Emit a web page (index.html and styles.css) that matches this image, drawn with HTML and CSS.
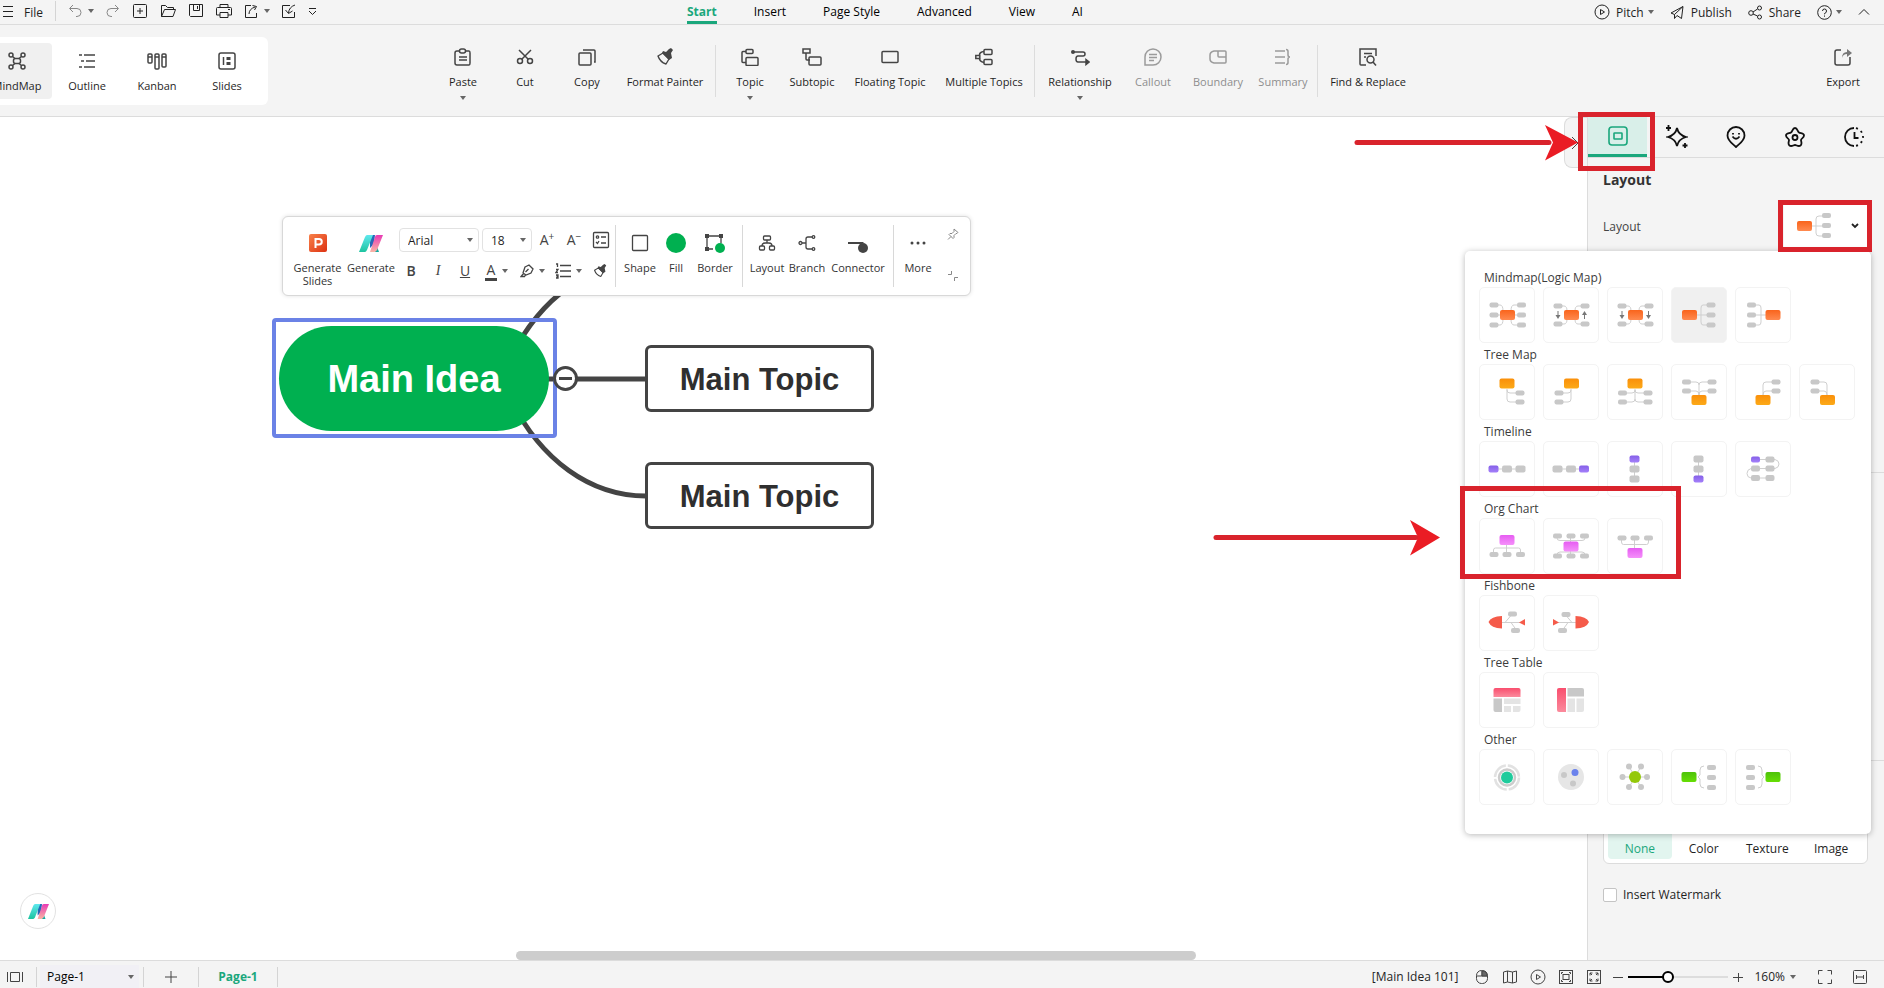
FILE: index.html
```
<!DOCTYPE html>
<html lang="en">
<head>
  <meta charset="UTF-8">
  <meta name="viewport" content="width=device-width, initial-scale=1.0">
  <title>Mind Map Editor</title>
  <link rel="stylesheet" href="styles.css">
</head>
<body>
  <!-- Shared gradients and symbols -->
  <svg class="defs" aria-hidden="true">
    <defs>
      <linearGradient id="g-orange" x1="0" y1="0" x2="0" y2="1"><stop offset="0" stop-color="#f9641c"/><stop offset="1" stop-color="#ff8a50"/></linearGradient>
      <linearGradient id="g-amber" x1="0" y1="0" x2="0" y2="1"><stop offset="0" stop-color="#fa8f0a"/><stop offset="1" stop-color="#fcaa18"/></linearGradient>
      <linearGradient id="g-purple" x1="0" y1="0" x2="0" y2="1"><stop offset="0" stop-color="#8560e8"/><stop offset="1" stop-color="#a480fa"/></linearGradient>
      <linearGradient id="g-pink" x1="0" y1="0" x2="0" y2="1"><stop offset="0" stop-color="#e65cf2"/><stop offset="1" stop-color="#f590fa"/></linearGradient>
      <linearGradient id="g-red" x1="0" y1="0" x2="0" y2="1"><stop offset="0" stop-color="#f94e6e"/><stop offset="1" stop-color="#fb8a9c"/></linearGradient>
      <linearGradient id="g-green" x1="0" y1="0" x2="0" y2="1"><stop offset="0" stop-color="#4dc20a"/><stop offset="1" stop-color="#66de05"/></linearGradient>
      <linearGradient id="g-slide" x1="0" y1="0" x2="1" y2="1"><stop offset="0" stop-color="#f8814a"/><stop offset="1" stop-color="#dd3212"/></linearGradient>
      <linearGradient id="g-teal" x1="0" y1="0" x2="0" y2="1"><stop offset="0" stop-color="#5fe8ee"/><stop offset="1" stop-color="#1ec4a0"/></linearGradient>
      <linearGradient id="g-rose" x1="0" y1="0" x2="0" y2="1"><stop offset="0" stop-color="#e83ab4"/><stop offset="1" stop-color="#f9b4a4"/></linearGradient>
    </defs>
    <symbol id="logo" viewBox="0 0 24 18">
      <g stroke="none">
        <path d="M13 10h4l3 8h-4z" fill="#14a8a0"/>
        <path d="M11 1h5l-1 9-4 4z" fill="#2667b8"/>
        <path d="M8 1h6L8 16q-1 2-2 2H0L6 3q1-2 2-2z" fill="url(#g-teal)"/>
        <path d="M18 1h6l-6 15q-1 2-3 2h-4l5-15q0-2 2-2z" fill="url(#g-rose)"/>
      </g>
    </symbol>
    <symbol id="brush" viewBox="0 0 18 18">
      <path d="M2 8l5-3 6 6-3 5q-6-2-8-8z" fill="none" stroke="#444" stroke-width="1.4" stroke-linejoin="round"/>
      <path d="M7 3l3 1 3-3 2-1 2 2-2 3 1 5-3 2-7-7z" fill="#444" stroke="none"/>
    </symbol>
    <symbol id="tri" viewBox="0 0 6 4"><path d="M0 0h6L3 4z"/></symbol>
  </svg>

  <!-- Menu bar -->
  <header class="menubar">
    <div class="quick">
      <button class="hamburger" aria-label="Menu"><svg width="12" height="12" viewBox="0 0 12 12"><path d="M1 1.500h10M1 6.500h10M1 11.500h10"/></svg></button>
      <button class="file">File</button>
      <span class="bar-sep"></span>
      <button class="undo dim" aria-label="Undo"><svg width="14" height="14" viewBox="0 0 14 14"><path d="M5 1L1.500 4.500 5 8M2 4.500h7a4 4 0 0 1 0 8H8"/></svg><svg class="tri" width="6" height="4"><use href="#tri"/></svg></button>
      <button class="dim" aria-label="Redo"><svg width="14" height="14" viewBox="0 0 14 14"><path d="M9 1l3.500 3.500L9 8M12 4.500H5a4 4 0 0 0 0 8h1"/></svg></button>
      <button aria-label="New"><svg width="16" height="16" viewBox="0 0 16 16"><rect x="1.500" y="1.500" width="13" height="13" rx="1"/><path d="M8 5v6M5 8h6"/></svg></button>
      <button aria-label="Open"><svg width="16" height="16" viewBox="0 0 16 16"><path d="M1.500 13.500v-11h4l2 2h6v2M1.500 13.500l3-7h11l-2.500 7z"/></svg></button>
      <button aria-label="Save"><svg width="16" height="16" viewBox="0 0 16 16"><path d="M1.500 1.500h13v12h-12l-1-1zM5.500 1.500v6h6v-6M9.500 3v3"/></svg></button>
      <button aria-label="Print"><svg width="16" height="16" viewBox="0 0 16 16"><path d="M4 5V1.500h8V5M4 12H.5V5.500q0-1 1-1h13q1 0 1 1V12H12M4 9.500h8v5H4zM12 6.500h2"/></svg></button>
      <button aria-label="Share file"><svg width="14" height="14" viewBox="0 0 14 14"><path d="M7 1.500H1.500v12h11V9M5 10q0-5 6-7M8.500 1.500l4 1-2 3.500"/></svg><svg class="tri" width="6" height="4"><use href="#tri"/></svg></button>
      <button aria-label="Import"><svg width="14" height="14" viewBox="0 0 14 14"><path d="M8 1.500H.5v12h12V8M13 1q-6 2-6.500 8M3.500 6L6.500 9.500 10.500 7"/></svg></button>
      <button aria-label="Customize"><svg width="9" height="9" viewBox="0 0 9 9"><path d="M1 1.500h7M1 4l3.500 3.500L8 4"/></svg></button>
    </div>
    <nav class="tabs">
      <a href="#" class="active">Start</a>
      <a href="#">Insert</a>
      <a href="#">Page Style</a>
      <a href="#">Advanced</a>
      <a href="#">View</a>
      <a href="#">AI</a>
    </nav>
    <div class="account">
      <button><svg width="16" height="16" viewBox="0 0 16 16"><circle cx="8" cy="8" r="7"/><path d="M6.500 5.500v5l4-2.500z"/></svg>Pitch<svg class="tri" width="6" height="4"><use href="#tri"/></svg></button>
      <button><svg width="15" height="15" viewBox="0 0 15 15"><path d="M1 8l12-6.500-1.500 12L7 10.500 4.500 13.500V9.500zM4.500 9.500L13 1.500"/></svg>Publish</button>
      <button><svg width="15" height="15" viewBox="0 0 15 15"><circle cx="3" cy="8" r="2.300"/><circle cx="11.500" cy="3" r="2"/><circle cx="11.500" cy="12" r="2"/><path d="M5 7l4.500-3M5 9l4.500 2"/></svg>Share</button>
      <button class="help" aria-label="Help"><svg width="15" height="15" viewBox="0 0 15 15"><circle cx="7.500" cy="7.500" r="6.800"/><path d="M5.500 6q0-2 2-2t2 2-2 2.500v.8M7.500 10.500v1.200"/></svg><svg class="tri" width="6" height="4"><use href="#tri"/></svg></button>
      <button aria-label="Collapse ribbon"><svg width="12" height="8" viewBox="0 0 12 8"><path d="M1 6.500l5-5 5 5"/></svg></button>
    </div>
  </header>

  <!-- Ribbon -->
  <section class="ribbon">
    <div class="modes">
      <button class="mode active"><svg width="18" height="18" viewBox="0 0 18 18"><circle cx="3" cy="3" r="2"/><circle cx="15" cy="3" r="2"/><circle cx="3" cy="15" r="2"/><circle cx="15" cy="15" r="2"/><rect x="5.500" y="6.500" width="7" height="5" rx="2"/><path d="M4.500 4.500l2.500 2M13.500 4.500L11 6.500M4.500 13.500l2.500-2M13.500 13.500l-2.500-2"/></svg>MindMap</button>
      <button class="mode"><svg width="18" height="18" viewBox="0 0 18 18"><path d="M1 3h3M6 3h11M3 9h3M8 9h9M1 15h3M6 15h11"/></svg>Outline</button>
      <button class="mode"><svg width="20" height="18" viewBox="0 0 20 18"><rect x="1" y="2" width="4" height="9" rx="1"/><rect x="8" y="2" width="4" height="15" rx="1"/><rect x="15" y="2" width="4" height="13" rx="1"/><path d="M1 5h4M8 5h4M15 5h4"/></svg>Kanban</button>
      <button class="mode"><svg width="18" height="18" viewBox="0 0 18 18"><rect x="1" y="1" width="16" height="16" rx="2"/><path d="M5.500 5v8"/><path d="M8.500 5h4v3h-4zM8.500 10h4v3h-4z" fill="#444" stroke="none"/></svg>Slides</button>
    </div>
    <div class="tools">
      <button class="tool w62"><svg width="18" height="18" viewBox="0 0 18 18"><path d="M5 3H3q-2 0-2 2v10q0 2 2 2h12q1 0 1-2V5q0-2-1-2h-3"/><rect x="5.500" y="1" width="6" height="4" rx="2"/><path d="M5 9h8M5 12h8"/></svg>Paste<svg class="tri" width="6" height="4"><use href="#tri"/></svg></button>
      <button class="tool w62"><svg width="18" height="18" viewBox="0 0 18 18"><circle cx="4" cy="13" r="2.500"/><circle cx="14" cy="13" r="2.500"/><path d="M3 2l9 9M15 2l-9 9"/></svg>Cut</button>
      <button class="tool w62"><svg width="18" height="18" viewBox="0 0 18 18"><rect x="1" y="5" width="12" height="12" rx="1"/><path d="M5 2h11q1 0 1 1v11h-1"/></svg>Copy</button>
      <button class="tool w94"><svg width="18" height="18"><use href="#brush"/></svg>Format Painter</button>
      <span class="tool-sep"></span>
      <button class="tool w62"><svg width="18" height="18" viewBox="0 0 18 18"><rect x="5" y="1.500" width="7" height="4" rx="1"/><path d="M5 3.500H2q-1 0-1 1v9q0 1 1 1h3"/><rect x="5" y="9.500" width="12" height="8" rx="1"/></svg>Topic<svg class="tri" width="6" height="4"><use href="#tri"/></svg></button>
      <button class="tool w62"><svg width="20" height="18" viewBox="0 0 20 18"><rect x="1" y="1" width="7" height="4"/><path d="M4 5v6q0 1 1 1h3"/><rect x="7" y="9" width="12" height="8" rx="1"/></svg>Subtopic</button>
      <button class="tool w94"><svg width="18" height="18" viewBox="0 0 18 18"><rect x="1" y="3.500" width="16" height="11" rx="1"/></svg>Floating Topic</button>
      <button class="tool w94"><svg width="18" height="18" viewBox="0 0 18 18"><rect x="9" y="1.500" width="8" height="5" rx="1"/><rect x="9" y="11.500" width="8" height="5" rx="1"/><rect x=".8" y="7.500" width="4" height="3"/><path d="M9 3.500Q4.500 4 4.500 7M9 14.500q-4.500-1-4.500-4"/></svg>Multiple Topics</button>
      <span class="tool-sep"></span>
      <button class="tool w84"><svg width="20" height="18" viewBox="0 0 20 18"><circle cx="3" cy="4" r="2" fill="#444" stroke="none"/><path d="M4 4h9q2 0 2 2t-2 2H8q-2 0-2 3t2 3h9"/><path d="M16 11.500l3 2.500-3 2.500z" fill="#444"/></svg>Relationship<svg class="tri" width="6" height="4"><use href="#tri"/></svg></button>
      <button class="tool w62" disabled><svg width="18" height="18" viewBox="0 0 18 18"><path d="M1 17V9a8 8 0 1 1 8 8zM5 6.500h8M5 9.500h8M5 12.500h5"/></svg>Callout</button>
      <button class="tool w68" disabled><svg width="18" height="18" viewBox="0 0 18 18"><path d="M5 3h11q1 0 1 1v10q0 1-1 1H5q-4-1-4-4V7q0-3 4-4zM9 3v5q0 1 1 1h7"/></svg>Boundary</button>
      <button class="tool w62" disabled><svg width="18" height="18" viewBox="0 0 18 18"><path d="M1 3h10M1 9h10M1 15h10M12 1.500q2 0 2 2V7q0 2 2 2-2 0-2 2v3.500q0 2-2 2"/></svg>Summary</button>
      <span class="tool-sep"></span>
      <button class="tool w94"><svg width="18" height="18" viewBox="0 0 18 18"><path d="M7 17H2q-1 0-1-1V1h16v7M5 5.500h8M5 9h2"/><circle cx="11.500" cy="11.500" r="3.500"/><path d="M14 14l3 3.500"/></svg>Find &amp; Replace</button>
      <button class="tool w62 export"><svg width="18" height="18" viewBox="0 0 18 18"><path d="M7 2H3Q1 2 1 4v11q0 2 2 2h11q2 0 2-2V9"/><path d="M8 10q0-6 5-6V1l5 4-5 4V6q-4 0-5 4z" fill="#777" stroke="none"/></svg>Export</button>
    </div>
  </section>

  <main class="workspace">
    <!-- Canvas -->
    <section class="canvas">
      <svg class="links" width="900" height="500" viewBox="0 0 900 500">
        <path d="M511 240C541 180 590 145 646 145M511 283C541 343 590 379 646 379M540 262H646"/>
      </svg>
      <div class="selection"></div>
      <div class="node root">Main Idea</div>
      <button class="toggle" aria-label="Collapse branch"></button>
      <div class="node topic topic-1">Main Topic</div>
      <div class="node topic topic-2">Main Topic</div>

      <div class="floatbar">
        <button class="fb slides"><svg width="18" height="18" viewBox="0 0 18 18"><rect width="18" height="18" rx="2" fill="url(#g-slide)" stroke="none"/><path d="M6.500 14V5h3.500a2.500 2.500 0 0 1 0 5.500H6.500" stroke="#fff" stroke-width="2"/></svg>Generate<br>Slides</button>
        <button class="fb gen"><svg width="24" height="18"><use href="#logo"/></svg>Generate</button>
        <div class="format">
          <div class="format-row">
            <select class="font-select" aria-label="Font"><option>Arial</option></select>
            <select class="size-select" aria-label="Font size"><option>18</option></select>
            <button class="letter" aria-label="Increase size">A<sup>+</sup></button>
            <button class="letter" aria-label="Decrease size">A<sup>−</sup></button>
            <button aria-label="Checklist"><svg width="18" height="18" viewBox="0 0 18 18"><rect x="1.500" y="1.500" width="15" height="15" rx="1"/><circle cx="5.500" cy="6" r="1.200"/><path d="M9 6h5M4 11l1.500 1.500L7 10M9 12h5"/></svg></button>
          </div>
          <div class="format-row second">
            <button class="letter bold">B</button>
            <button class="letter italic">I</button>
            <button class="letter under">U</button>
            <button class="letter split"><span class="ink">A</span><svg class="tri" width="6" height="4"><use href="#tri"/></svg></button>
            <button class="split" aria-label="Highlight"><svg width="14" height="14" viewBox="0 0 14 14"><path d="M5 3l4-2 4 4-2 4-5 2-3-2zM3.500 9.500L1 12.500h3.500l1-1.500M5.500 8l3-3"/></svg><svg class="tri" width="6" height="4"><use href="#tri"/></svg></button>
            <button class="split" aria-label="List"><svg width="16" height="16" viewBox="0 0 16 16"><path d="M5 2.500h11M5 8h11M5 13.500h11M1 1h1.500v3M1 6.500h2L1 9.500h2M1 12h2v3H1M1.500 13.500H3"/></svg><svg class="tri" width="6" height="4"><use href="#tri"/></svg></button>
            <button aria-label="Painter"><svg width="14" height="14"><use href="#brush"/></svg></button>
          </div>
        </div>
        <span class="fb-sep"></span>
        <button class="fb w40"><svg width="18" height="18" viewBox="0 0 18 18"><rect x="1.500" y="1.500" width="15" height="15" rx="1"/></svg>Shape</button>
        <button class="fb w32"><svg width="20" height="20" viewBox="0 0 20 20"><circle cx="10" cy="10" r="10" fill="#00b050" stroke="none"/></svg>Fill</button>
        <button class="fb w46"><svg width="20" height="20" viewBox="0 0 20 20"><path d="M2 3h14M2 3v13M16 3v7M2 16h6"/><path d="M0 1h4v4H0zM14 1h4v4h-4zM0 14h4v4H0z" fill="#444" stroke="none"/><circle cx="15" cy="15" r="5" fill="#00b050" stroke="none"/></svg>Border</button>
        <span class="fb-sep"></span>
        <button class="fb w40"><svg width="18" height="18" viewBox="0 0 18 18"><rect x="5.500" y="2" width="7" height="4" rx="1"/><rect x="1.500" y="12" width="5" height="4" rx="1"/><rect x="11.500" y="12" width="5" height="4" rx="1"/><path d="M9 6v3M4 12q0-3 3-3h4q3 0 3 3"/></svg>Layout</button>
        <button class="fb w40"><svg width="18" height="18" viewBox="0 0 18 18"><circle cx="2.500" cy="9" r="1.500"/><path d="M4 9h4M14 3h-4q-2 0-2 2v8q0 2 2 2h4"/><circle cx="15.500" cy="3" r="1.300"/><circle cx="15.500" cy="15" r="1.300"/></svg>Branch</button>
        <button class="fb w62"><svg width="20" height="20" viewBox="0 0 20 20"><path d="M0 9h16l-2 2H0z" fill="#444" stroke="none"/><circle cx="15" cy="15" r="5" fill="#444" stroke="none"/></svg>Connector</button>
        <span class="fb-sep"></span>
        <button class="fb w40"><svg width="18" height="18" viewBox="0 0 18 18"><g fill="#444" stroke="none"><circle cx="3" cy="9" r="1.500"/><circle cx="9" cy="9" r="1.500"/><circle cx="15" cy="9" r="1.500"/></g></svg>More</button>
        <div class="fb-end">
          <button aria-label="Pin"><svg width="12" height="12" viewBox="0 0 12 12"><path d="M7 1l4 3.500-1 1-1 0-2 2v2l-1 1L2 6.500l1-1h2l2-2zM4 8.500L1 11.500"/></svg></button>
          <button aria-label="Shrink"><svg width="12" height="12" viewBox="0 0 12 12"><path d="M1 4.500h3.500V1M7.500 11V7.500H11"/></svg></button>
        </div>
      </div>

      <button class="assistant" aria-label="Assistant"><svg width="21" height="16"><use href="#logo"/></svg></button>
      <div class="hscroll"></div>
      <button class="drawer" aria-label="Hide panel"><svg width="8" height="14" viewBox="0 0 8 14"><path d="M1 1l6 6-6 6"/></svg></button>
      <svg class="arrow arrow-1" width="224" height="36" viewBox="0 0 224 36"><path class="shaft" d="M3 17.500h192"/><path class="head" d="M191 0l33 17.500-33 18 8-18z"/></svg>
      <svg class="arrow arrow-2" width="227" height="36" viewBox="0 0 227 36"><path class="shaft" d="M3 17.500h200"/><path class="head" d="M197 0l30 17.500-30 18 8-18z"/></svg>
    </section>

    <!-- Right panel -->
    <aside class="panel">
      <nav class="panel-tabs">
        <button class="active" aria-label="Layout"><svg width="20" height="20" viewBox="0 0 20 20"><rect x="1" y="1" width="18" height="18" rx="3"/><rect x="6" y="7" width="8" height="6" rx=".5"/></svg></button>
        <button aria-label="AI"><svg width="22" height="24" viewBox="0 0 22 24"><path d="M11 3q1.500 7 9 9-7.500 2-9 9-1.500-7-9-9 7.500-2 9-9z"/><path d="M2.500 0v6M0 3h5M19 18v5M16.500 20.500h5"/></svg></button>
        <button aria-label="Icons"><svg width="20" height="22" viewBox="0 0 20 22"><path d="M10 21C7 18 1.500 15 1.500 9.500a8.500 8.500 0 0 1 17 0C18.500 15 13 18 10 21zM6.500 10.500q3.500 4.500 7 0M7 7v1.500M13 7v1.500"/></svg></button>
        <button aria-label="Clipart"><svg width="20" height="20" viewBox="0 0 20 20"><path d="M10 1c2.500 0 2.500 3.500 4 4.500s5 .5 5 3-3 3-3 4.500 1.500 4-.5 5.500-4-.5-5.500-.5-3.500 2-5.500.5S4 14.500 4 13 1 11 1 8.500s3.500-2 5-3S7.500 1 10 1z"/><circle cx="10" cy="10.500" r="2.500"/></svg></button>
        <button aria-label="History"><svg width="20" height="20" viewBox="0 0 20 20"><path d="M10 1a9 9 0 0 0 0 18M10.500 5v6h4"/><path d="M10 1a9 9 0 0 1 0 18" stroke-dasharray="2 3.500" stroke-dashoffset="-2"/></svg></button>
      </nav>

      <section class="panel-section first">
        <h2>Layout</h2>
        <div class="field">
          <span>Layout</span>
          <button class="picker" aria-label="Choose layout">
            <svg width="36" height="28" viewBox="10 14 36 28"><path class="l" d="M25 28h11M36 18h-4q-3 0-3 3v14q0 3 3 3h4"/><rect class="m" x="10" y="23"/><rect class="n" x="35" y="15"/><rect class="n" x="35" y="25"/><rect class="n" x="35" y="35"/></svg>
            <svg class="chev" width="8" height="6" viewBox="0 0 8 6"><path d="M1 1l3 3 3-3"/></svg>
          </button>
        </div>
      </section>
      <section class="panel-section second"></section>
      <section class="panel-section third">
        <div class="fills">
          <button class="active"><i></i>None</button>
          <button><i></i>Color</button>
          <button><i></i>Texture</button>
          <button><i></i>Image</button>
        </div>
        <label class="check" for="watermark"><input type="checkbox" id="watermark">Insert Watermark</label>
      </section>

      <!-- Layout popup -->
      <div class="popup">
        <h3>Mindmap(Logic Map)</h3>
        <div class="tiles">
          <button class="tile"><svg viewBox="0 0 56 56"><path class="l" d="M19 18h2q3 0 3 6M19 38h2q3 0 3-6M19 28h19M38 18h-3q-3 0-3 6M38 38h-3q-3 0-3-6"/><rect class="m" x="21" y="23"/><rect class="n" x="10.500" y="15.500"/><rect class="n" x="10.500" y="25.500"/><rect class="n" x="10.500" y="35.500"/><rect class="n" x="38" y="15.500"/><rect class="n" x="38" y="25.500"/><rect class="n" x="38" y="35.500"/></svg></button>
          <button class="tile"><svg viewBox="0 0 56 56"><path class="l" d="M19 19h2q3 0 3 5M19 37h2q3 0 3-5M38 19h-3q-3 0-3 5M38 37h-3q-3 0-3-5"/><rect class="m" x="21" y="23"/><rect class="n" x="10.500" y="16.500"/><rect class="n" x="10.500" y="34.500"/><rect class="n" x="37.500" y="16.500"/><rect class="n" x="37.500" y="34.500"/><path class="a" d="M14.500 24h1v4h2L15 32l-2.500-4h2zM41 32h1v-4h2l-2.500-4-2.500 4h2z"/></svg></button>
          <button class="tile"><svg viewBox="0 0 56 56"><path class="l" d="M19 19h2q3 0 3 5M19 37h2q3 0 3-5M38 19h-3q-3 0-3 5M38 37h-3q-3 0-3-5"/><rect class="m" x="21" y="23"/><rect class="n" x="10.500" y="16.500"/><rect class="n" x="10.500" y="34.500"/><rect class="n" x="37.500" y="16.500"/><rect class="n" x="37.500" y="34.500"/><path class="a" d="M14.500 24h1v4h2L15 32l-2.500-4h2zM41 24h1v4h2l-2.500 4-2.500-4h2z"/></svg></button>
          <button class="tile active"><svg viewBox="0 0 56 56"><path class="l" d="M25 28h11M36 18h-4q-2 0-2 3v14q0 3 2 3h4"/><rect class="m" x="11" y="23"/><rect class="n" x="35.500" y="15.500"/><rect class="n" x="35.500" y="25.500"/><rect class="n" x="35.500" y="35.500"/></svg></button>
          <button class="tile"><svg viewBox="0 0 56 56"><path class="l" d="M31 28H20M20 18h4q2 0 2 3v14q0 3-2 3h-4"/><rect class="m" x="30.500" y="23"/><rect class="n" x="12" y="15.500"/><rect class="n" x="12" y="25.500"/><rect class="n" x="12" y="35.500"/></svg></button>
        </div>
        <h3>Tree Map</h3>
        <div class="tiles amber">
          <button class="tile"><svg viewBox="0 0 56 56"><path class="l" d="M28 25v10q0 3 3 3h6M28 26q0 3 3 3h6"/><rect class="m" x="20.500" y="14.500"/><rect class="n" x="36.500" y="26.500"/><rect class="n" x="36.500" y="35.500"/></svg></button>
          <button class="tile"><svg viewBox="0 0 56 56"><path class="l" d="M28 25v10q0 3-3 3h-6M28 26q0 3-3 3h-6"/><rect class="m" x="21" y="14.500"/><rect class="n" x="11.500" y="26.500"/><rect class="n" x="11.500" y="35.500"/></svg></button>
          <button class="tile"><svg viewBox="0 0 56 56"><path class="l" d="M28 25v10q0 3 3 3h6M28 26q0 3 3 3h6M28 35q0 3-3 3h-6M28 26q0 3-3 3h-6"/><rect class="m" x="20.500" y="14.500"/><rect class="n" x="11" y="26.500"/><rect class="n" x="11" y="35.500"/><rect class="n" x="36.500" y="26.500"/><rect class="n" x="36.500" y="35.500"/></svg></button>
          <button class="tile"><svg viewBox="0 0 56 56"><path class="l" d="M28 32V21q0-3 3-3h6M28 31q0-4 3-4h6M28 21q0-3-3-3h-6M28 31q0-4-3-4h-6"/><rect class="m" x="20.500" y="31"/><rect class="n" x="11" y="15.500"/><rect class="n" x="11" y="24.500"/><rect class="n" x="36.500" y="15.500"/><rect class="n" x="36.500" y="24.500"/></svg></button>
          <button class="tile"><svg viewBox="0 0 56 56"><path class="l" d="M28 32V21q0-3 3-3h6M28 31q0-4 3-4h6"/><rect class="m" x="20.500" y="31"/><rect class="n" x="36.500" y="15.500"/><rect class="n" x="36.500" y="24.500"/></svg></button>
          <button class="tile"><svg viewBox="0 0 56 56"><path class="l" d="M28 32V21q0-3-3-3h-6M28 31q0-4-3-4h-6"/><rect class="m" x="21" y="31"/><rect class="n" x="11.500" y="15.500"/><rect class="n" x="11.500" y="24.500"/></svg></button>
        </div>
        <h3>Timeline</h3>
        <div class="tiles purple">
          <button class="tile"><svg viewBox="0 0 56 56"><path class="l" d="M15 28h26"/><rect class="s" x="9.500" y="24.500"/><rect class="b" x="23" y="24.500"/><rect class="b" x="36.500" y="24.500"/></svg></button>
          <button class="tile"><svg viewBox="0 0 56 56"><path class="l" d="M15 28h26"/><rect class="b" x="9.500" y="24.500"/><rect class="b" x="23" y="24.500"/><rect class="s" x="36" y="24.500"/></svg></button>
          <button class="tile"><svg viewBox="0 0 56 56"><path class="l" d="M27.500 18v20"/><rect class="s" x="22.500" y="14.500"/><rect class="b" x="22.500" y="24.500"/><rect class="b" x="22.500" y="34.500"/></svg></button>
          <button class="tile"><svg viewBox="0 0 56 56"><path class="l" d="M27.500 18v20"/><rect class="b" x="22.500" y="14.500"/><rect class="b" x="22.500" y="24.500"/><rect class="s" x="22.500" y="34.500"/></svg></button>
          <button class="tile small"><svg viewBox="0 0 56 56"><path class="l" d="M20 18.500h20q4 1 4 4.500t-4 4.500H16q-4 1-4 5t4 4.500h20"/><rect class="s" x="16" y="15.500"/><rect class="b" x="30.500" y="15.500"/><rect class="b" x="16" y="24.500"/><rect class="b" x="30.500" y="24.500"/><rect class="b" x="16" y="34"/><rect class="b" x="30.500" y="34"/></svg></button>
        </div>
        <h3>Org Chart</h3>
        <div class="tiles pink">
          <button class="tile"><svg viewBox="0 0 56 56"><path class="l" d="M27.500 27v8M14.500 35v-3q0-2 2-2h23q2 0 2 2v3"/><rect class="m" x="20.500" y="17"/><rect class="n" x="10.500" y="34"/><rect class="n" x="23.500" y="34"/><rect class="n" x="37" y="34"/></svg></button>
          <button class="tile"><svg viewBox="0 0 56 56"><path class="l" d="M27.500 20v18M14 20q0 2.500 3 2.500h22q3 0 3-2.500M14 37q0-3 3-3h22q3 0 3 3"/><rect class="m" x="20.500" y="23.500"/><rect class="n" x="10" y="15.500"/><rect class="n" x="23.500" y="15.500"/><rect class="n" x="37" y="15.500"/><rect class="n" x="10" y="35.500"/><rect class="n" x="23.500" y="35.500"/><rect class="n" x="37" y="35.500"/></svg></button>
          <button class="tile"><svg viewBox="0 0 56 56"><path class="l" d="M27.500 20v12M14.500 21v3q0 2.500 2 2.500h23q2 0 2-2.500v-3"/><rect class="m" x="20.500" y="30"/><rect class="n" x="10.500" y="17.500"/><rect class="n" x="23.500" y="17.500"/><rect class="n" x="37" y="17.500"/></svg></button>
        </div>
        <h3>Fishbone</h3>
        <div class="tiles">
          <button class="tile"><svg viewBox="0 0 56 56"><path class="l" d="M23 27.500h18M26 27.500l6-7M32 27.500l5 7"/><path d="M23 21v12.500Q12 33 9.500 27 12 21.500 23 21zM46 24v6.500L40 27.500z" fill="#f55b4a"/><rect class="n" x="29" y="16.500"/><rect class="n" x="32" y="33"/></svg></button>
          <button class="tile"><svg viewBox="0 0 56 56"><path class="l" d="M15 27.500h18M29 27.500l-6-7M25 27.500l-5 7"/><path d="M32.500 21v12.500Q43.500 33 46 27 43.500 21.500 32.500 21zM10 24v6.500l6-3z" fill="#f55b4a"/><rect class="n" x="18.500" y="17"/><rect class="n" x="15" y="33"/></svg></button>
        </div>
        <h3>Tree Table</h3>
        <div class="tiles">
          <button class="tile"><svg viewBox="0 0 56 56"><path d="M14.500 25v-7q0-2 2-2h23q2 0 2 2v7z" fill="url(#g-red)"/><path d="M14.500 26.500H23V40h-6.500q-2 0-2-2z" fill="#c8c8c8"/><path d="M25 26.500h16.500V32H25zM25 34h7v6h-7zM34 34h7.500v4q0 2-2 2H34z" fill="#e4e4e4"/></svg></button>
          <button class="tile"><svg viewBox="0 0 56 56"><path d="M23 16v24h-7q-2 0-2-2V18q0-2 2-2z" fill="url(#g-red)"/><path d="M24.500 16h14.500q2 0 2 2v6.500H24.500z" fill="#c8c8c8"/><path d="M24.500 26.500H32V40h-7.500zM33.500 26.500H41V38q0 2-2 2h-5.500z" fill="#e4e4e4"/></svg></button>
        </div>
        <h3>Other</h3>
        <div class="tiles green">
          <button class="tile"><svg viewBox="0 0 56 56"><circle cx="28" cy="28.500" r="12" fill="none" stroke="#e2e2e2" stroke-width="2.500" stroke-dasharray="17 2"/><circle cx="28" cy="28.500" r="8" fill="none" stroke="#ccc" stroke-width="2.500"/><circle cx="28" cy="28.500" r="6" fill="#1fcb9c"/></svg></button>
          <button class="tile"><svg viewBox="0 0 56 56"><circle cx="28" cy="28" r="13" fill="#e6e6e6"/><circle cx="32" cy="23.500" r="3.500" fill="#6a82ec"/><circle cx="21" cy="26" r="3" fill="#c8c8c8"/><circle cx="30" cy="34.500" r="3" fill="#c8c8c8"/></svg></button>
          <button class="tile"><svg viewBox="0 0 56 56"><path class="l" d="M15.500 28h24M22 17.500l12 21M34 17.500l-12 21"/><circle cx="28" cy="28" r="6" fill="#94c80a"/><g fill="#c8c8c8"><circle cx="22" cy="17.500" r="3"/><circle cx="34" cy="17.500" r="3"/><circle cx="15.500" cy="28" r="3"/><circle cx="40" cy="28" r="3"/><circle cx="22" cy="38" r="3"/><circle cx="34" cy="38" r="3"/></g></svg></button>
          <button class="tile"><svg viewBox="0 0 56 56"><path class="l" d="M33 17q-4 0-4 4v5l-2 2 2 2v5q0 4 4 4"/><rect class="m" x="10.500" y="23"/><rect class="n" x="36" y="16"/><rect class="n" x="36" y="26"/><rect class="n" x="36" y="36"/></svg></button>
          <button class="tile"><svg viewBox="0 0 56 56"><path class="l" d="M23 17q4 0 4 4v5l2 2-2 2v5q0 4-4 4"/><rect class="m" x="30.500" y="23"/><rect class="n" x="11" y="16"/><rect class="n" x="11" y="26"/><rect class="n" x="11" y="36"/></svg></button>
        </div>
      </div>

      <!-- Callout frames -->
      <div class="frame frame-tab"></div>
      <div class="frame frame-picker"></div>
      <div class="frame frame-org"></div>
    </aside>
  </main>

  <!-- Status bar -->
  <footer class="status">
    <button class="outline-btn" aria-label="Page list"><svg width="16" height="12" viewBox="0 0 16 12"><path d="M.5 1v10M15.500 1v10M3.500 1.500h9v9h-9z"/></svg></button>
    <span class="bar-sep"></span>
    <select class="page-select" aria-label="Page"><option>Page-1</option></select>
    <span class="bar-sep"></span>
    <button class="add" aria-label="Add page"><svg width="14" height="14" viewBox="0 0 14 14"><path d="M7 1v12M1 7h12"/></svg></button>
    <span class="bar-sep"></span>
    <a href="#" class="page-link">Page-1</a>
    <span class="bar-sep"></span>
    <div class="status-right">
      <span class="info">[Main Idea 101]</span>
      <button aria-label="Mouse mode"><svg width="16" height="16" viewBox="0 0 16 16"><rect x="2.500" y="1.500" width="11" height="13" rx="5"/><path d="M2.500 7h11M8 1.500V7"/><path d="M8 2q5 0 5 5H8z" fill="#666"/></svg></button>
      <button aria-label="Overview"><svg width="16" height="16" viewBox="0 0 16 16"><path d="M1.500 3l4-1 5 1 4-1v11l-4 1-5-1-4 1zM5.500 2v11M10.500 3v11"/></svg></button>
      <button aria-label="Play"><svg width="16" height="16" viewBox="0 0 16 16"><circle cx="8" cy="8" r="7"/><path d="M6.500 5.500v5l4-2.500z"/></svg></button>
      <button aria-label="Fit page"><svg width="16" height="16" viewBox="0 0 16 16"><rect x="1.500" y="1.500" width="13" height="13"/><rect x="5" y="5.500" width="6" height="5"/><path d="M3.500 5V3.500H5M11 3.500h1.500V5M3.500 11v1.500H5M11 12.500h1.500V11"/></svg></button>
      <button aria-label="Focus"><svg width="16" height="16" viewBox="0 0 16 16"><rect x="1.500" y="1.500" width="13" height="13"/><path d="M4 6.500V4h2.500M9.500 4H12v2.500M4 9.500V12h2.500M9.500 12H12V9.500M4 4l2 2M12 4l-2 2M4 12l2-2M12 12l-2-2"/></svg></button>
      <button class="step" aria-label="Zoom out"><svg width="10" height="10" viewBox="0 0 10 10"><path d="M0 5.500h10"/></svg></button>
      <input type="range" class="zoom" min="0" max="100" value="38" aria-label="Zoom">
      <button class="step" aria-label="Zoom in"><svg width="10" height="10" viewBox="0 0 10 10"><path d="M0 5.500h10M5.500 1v9"/></svg></button>
      <button class="percent">160%<svg class="tri" width="6" height="4"><use href="#tri"/></svg></button>
      <button class="full" aria-label="Full screen"><svg width="16" height="16" viewBox="0 0 16 16"><path d="M1.500 5.500v-4h4M10.500 1.500h4v4M1.500 10.500v4h4M10.500 14.500h4v-4"/></svg></button>
      <button aria-label="Fit width"><svg width="16" height="16" viewBox="0 0 16 16"><rect x="1.500" y="1.500" width="13" height="13" rx="1"/><path d="M4 8h8M4.500 6v4M11.500 6v4"/></svg></button>
    </div>
  </footer>
</body>
</html>
```
FILE: styles.css
```
:root {
  --bg: #f4f4f4;
  --line: #dcdcdc;
  --ink: #444;
  --text: #1f1f1f;
  --accent: #1aa77c;
  --mark: #d9232c;
}
* {
  box-sizing: border-box;
}
body {
  margin: 0;
  height: 100vh;
  display: flex;
  flex-direction: column;
  overflow: hidden;
  font-family: "Open Sans", "Noto Sans", sans-serif;
  font-size: 12px;
  color: var(--text);
  background: var(--bg);
}
button, select, input {
  font: inherit;
  color: inherit;
}
button {
  display: flex;
  align-items: center;
  justify-content: center;
  padding: 0;
  border: none;
  background: none;
  white-space: nowrap;
}
a {
  color: inherit;
  text-decoration: none;
}
svg {
  flex: none;
  fill: none;
  stroke: var(--ink);
}
.tri {
  fill: #666;
  stroke: none;
}
.defs {
  position: absolute;
  width: 0;
  height: 0;
}
.bar-sep {
  width: 1px;
  height: 20px;
  background: #d4d4d4;
}

/* Menu bar */
.menubar {
  display: flex;
  flex: none;
  height: 25px;
  border-bottom: 1px solid var(--line);
}
.menubar svg:not(.tri) {
  stroke: #222;
}
.quick {
  flex: none;
  width: 687px;
  display: flex;
  align-items: center;
  padding: 0 0 2px 2px;
  gap: 12px;
}
.quick .file {
  margin: 2px 0 0 -2px;
}
.quick .dim svg:not(.tri) {
  stroke: #888;
}
.quick button {
  gap: 6px;
}
.tabs {
  display: flex;
  gap: 37px;
}
.tabs a {
  line-height: 24px;
  color: #000;
  white-space: nowrap;
}
.tabs .active {
  color: var(--accent);
  font-weight: 700;
  border-bottom: 3px solid var(--accent);
  height: 24px;
}
.account {
  display: flex;
  align-items: center;
  margin-left: auto;
  padding-right: 14px;
  gap: 16px;
}
.account button {
  gap: 6px;
}
.account .tri {
  margin-left: -2px;
}

/* Ribbon */
.ribbon {
  display: flex;
  flex: none;
  height: 92px;
  border-bottom: 1px solid var(--line);
}
.ribbon button {
  font-size: 11px;
}
.ribbon svg:not(.tri) {
  stroke-width: 1.5;
}
.modes {
  flex: none;
  display: flex;
  align-self: flex-start;
  margin: 12px 0 0 -18px;
  padding: 6px 6px 6px 0;
  background: #fff;
  border-radius: 6px;
}
.mode {
  flex-direction: column;
  width: 70px;
  height: 56px;
  padding-top: 2px;
  gap: 8px;
  border-radius: 4px;
}
.mode.active {
  background: #f0f0f0;
}
.tools {
  flex: 1;
  display: flex;
  padding: 23px 10px 0 164px;
}
.tool {
  flex-direction: column;
  justify-content: flex-start;
  height: 60px;
  gap: 8px;
  line-height: 15px;
}
.tool .tri {
  margin-top: -1px;
}
.tool:disabled {
  opacity: 0.5;
}
.export {
  margin-left: auto;
}
.tool-sep {
  width: 1px;
  height: 52px;
  margin: -3px 3px 0;
  background: var(--line);
}
.w32 { width: 32px; }
.w40 { width: 40px; }
.w46 { width: 46px; }
.w62 { width: 62px; }
.w68 { width: 68px; }
.w84 { width: 84px; }
.w94 { width: 94px; }

/* Canvas */
.workspace {
  flex: 1;
  display: flex;
  min-height: 0;
}
.canvas {
  flex: 1;
  position: relative;
  background: #fff;
}
.links {
  position: absolute;
  left: 0;
  top: 0;
  stroke-width: 5;
}
.selection {
  position: absolute;
  left: 272px;
  top: 201px;
  width: 285px;
  height: 120px;
  border: 4px solid #6b82e6;
  border-radius: 4px;
}
.node {
  position: absolute;
  display: flex;
  align-items: center;
  justify-content: center;
  padding-top: 2px;
  font-family: "Liberation Sans", Arial, sans-serif;
  font-weight: 700;
}
.root {
  left: 279px;
  top: 209px;
  width: 270px;
  height: 105px;
  border-radius: 53px;
  background: #00b050;
  color: #fff;
  font-size: 38px;
}
.topic {
  left: 645px;
  width: 229px;
  height: 67px;
  border: 3px solid var(--ink);
  border-radius: 6px;
  background: #fff;
  color: #2f2f2f;
  font-size: 31px;
}
.topic-1 {
  top: 228px;
}
.topic-2 {
  top: 345px;
}
.toggle {
  position: absolute;
  left: 553px;
  top: 249px;
  width: 25px;
  height: 25px;
  border: 3px solid var(--ink);
  border-radius: 50%;
  background: #fff;
}
.toggle::before {
  content: "";
  width: 13px;
  height: 3px;
  background: var(--ink);
}

/* Floating toolbar */
.floatbar {
  position: absolute;
  left: 282px;
  top: 99px;
  width: 689px;
  height: 80px;
  display: flex;
  padding: 11px 11px 0 9px;
  background: #fff;
  border: 1px solid #d8d8d8;
  border-radius: 6px;
  box-shadow: 0 0 4px rgba(0, 0, 0, 0.12);
}
.floatbar svg {
  stroke-width: 1.3;
}
.fb {
  flex: none;
  flex-direction: column;
  justify-content: flex-start;
  height: 64px;
  padding-top: 5px;
  font-size: 11px;
  line-height: 13px;
  color: #333;
}
.fb svg {
  height: 20px;
  margin-bottom: 8px;
}
.slides {
  width: 51px;
}
.gen {
  width: 56px;
}
.format {
  flex: none;
  width: 212px;
}
.format-row {
  display: flex;
  align-items: center;
  height: 24px;
  gap: 3px;
}
.format-row button {
  flex: none;
  width: 24px;
}
.format-row select {
  flex: none;
  height: 24px;
  padding: 0 8px;
  border: 1px solid #e2e2e2;
  border-radius: 4px;
  appearance: none;
  background: url("data:image/svg+xml,%3Csvg xmlns='http://www.w3.org/2000/svg' width='6' height='4'%3E%3Cpath d='M0 0h6L3 4z' fill='%23666'/%3E%3C/svg%3E") no-repeat right 5px center #fff;
}
.format-row .font-select {
  width: 80px;
}
.format-row .size-select {
  width: 50px;
}
.second {
  margin-top: 7px;
}
.letter {
  font-size: 14px;
  line-height: 18px;
  color: var(--ink);
}
.letter sup {
  font-size: 10px;
  line-height: 10px;
  align-self: flex-start;
}
.bold {
  font-weight: 600;
}
.italic {
  font-family: "Liberation Serif", serif;
  font-style: italic;
}
.under {
  text-decoration: underline;
}
.ink {
  line-height: 16px;
  padding: 0 2px;
  border-bottom: 3px solid var(--ink);
}
.second .split {
  width: 33px;
  gap: 5px;
}
.fb-sep {
  flex: none;
  width: 1px;
  height: 62px;
  margin: -3px 4px 0;
  background: #d8d8d8;
}
.fb-end {
  display: flex;
  flex-direction: column;
  gap: 30px;
  margin-left: auto;
}
.fb-end svg {
  stroke: #888;
  stroke-width: 1;
}
.assistant {
  position: absolute;
  left: 20px;
  bottom: 31px;
  width: 36px;
  height: 36px;
  border: 1px solid #e2e2e2;
  border-radius: 50%;
  background: #fff;
}
.hscroll {
  position: absolute;
  left: 516px;
  right: 391px;
  bottom: 0;
  height: 9px;
  border-radius: 5px;
  background: #cdcdcd;
}
.drawer {
  position: absolute;
  right: 0;
  top: 0;
  width: 23px;
  height: 51px;
  padding-right: 2px;
  border: 1px solid var(--line);
  border-right: none;
  border-radius: 8px 0 0 8px;
  background: var(--bg);
}

/* Callout marks */
.arrow {
  position: absolute;
  z-index: 3;
}
.arrow .shaft {
  stroke: var(--mark);
  stroke-width: 5;
  stroke-linecap: round;
}
.arrow .head {
  fill: #ea1c24;
  stroke: none;
}
.arrow-1 {
  right: 9px;
  top: 8px;
}
.arrow-2 {
  right: 147px;
  top: 403px;
}
.frame {
  position: absolute;
  border: 5px solid var(--mark);
  pointer-events: none;
}
.frame-tab {
  left: -10px;
  top: -5px;
  width: 77px;
  height: 59px;
}
.frame-picker {
  right: 12px;
  top: 83px;
  width: 94px;
  height: 52px;
}
.frame-org {
  right: 203px;
  top: 369px;
  width: 221px;
  height: 93px;
}

/* Right panel */
.panel {
  flex: none;
  width: 297px;
  position: relative;
  display: flex;
  flex-direction: column;
  border-left: 1px solid var(--line);
  background: var(--bg);
}
.panel-tabs {
  display: flex;
  height: 41px;
  flex: none;
  padding-right: 1px;
  border-bottom: 1px solid var(--line);
}
.panel-tabs button {
  flex: 1;
}
.panel-tabs svg {
  stroke: #111;
  stroke-width: 1.8;
}
.panel-tabs .active {
  background: #d9efe9;
  border-bottom: 3px solid var(--accent);
}
.panel-tabs .active svg {
  stroke: var(--accent);
  stroke-width: 1.6;
}
.panel-section {
  border-bottom: 1px solid var(--line);
  padding: 0 16px 0 15px;
}
.panel-section h2 {
  margin: 0;
  font-size: 14px;
  line-height: 20px;
  font-weight: 700;
  color: #333;
}
.first {
  height: 315px;
  padding-top: 12px;
}
.second.panel-section {
  margin: 0;
  height: 288px;
}
.third {
  border: none;
  padding-top: 27px;
}
.field {
  display: flex;
  align-items: center;
  justify-content: space-between;
  margin-top: 15px;
  color: #444;
}
.picker {
  width: 84px;
  height: 42px;
  padding-left: 4px;
  gap: 18px;
  background: #fff;
}
.chev {
  stroke-width: 1.8;
  stroke: #222;
}
.fills {
  display: flex;
  padding: 4px;
  border: 1px solid var(--line);
  border-radius: 6px;
  background: #fff;
}
.fills button {
  flex: 1;
  flex-direction: column;
  justify-content: flex-end;
  height: 66px;
  padding-bottom: 2px;
  border-radius: 4px;
}
.fills i {
  width: 14px;
  height: 14px;
  margin-bottom: 6px;
  border: 2px solid #222;
  border-radius: 2px;
}
.fills .active {
  color: var(--accent);
  background: #e2f5ef;
}
.check {
  display: flex;
  align-items: center;
  gap: 6px;
  margin-top: 22px;
}
.check input {
  appearance: none;
  width: 14px;
  height: 14px;
  margin: 0;
  border: 1px solid #c4c4c4;
  border-radius: 2px;
  background: #fff;
}

/* Layout popup */
.popup {
  position: absolute;
  right: 13px;
  top: 134px;
  padding: 15px 14px 29px;
  background: #fff;
  border-radius: 5px;
  box-shadow: 0 1px 6px rgba(0, 0, 0, 0.28);
}
.popup h3 {
  margin: 0;
  padding: 2px 0 0 5px;
  font-size: 12px;
  line-height: 19px;
  font-weight: 400;
  color: #3c3c3c;
}
.tiles {
  display: grid;
  grid-template-columns: repeat(6, 56px);
  gap: 8px;
  padding-right: 2px;
}
.tile {
  width: 56px;
  height: 56px;
  border: 1px solid #f3f3f3;
  border-radius: 5px;
}
.tile.active {
  background: #f0f0f0;
}
.tile svg {
  width: 56px;
  height: 56px;
  stroke: none;
}
svg .l {
  fill: none;
  stroke: #cfcfcf;
  stroke-width: 1;
}
svg .n {
  width: 9px;
  height: 5px;
  rx: 2px;
  fill: #c8c8c8;
  stroke: none;
}
svg .b {
  width: 10px;
  height: 7px;
  rx: 2px;
  fill: #c8c8c8;
}
svg .s {
  width: 10px;
  height: 7px;
  rx: 2px;
  fill: url(#g-purple);
}
.small .b,
.small .s {
  width: 9px;
  height: 6px;
}
svg .m {
  width: 15px;
  height: 10px;
  rx: 2px;
  fill: url(#g-orange);
  stroke: none;
}
svg .a {
  fill: #777;
}
.amber .m { fill: url(#g-amber); }
.pink .m { fill: url(#g-pink); }
.green .m { fill: url(#g-green); }

/* Status bar */
.status {
  flex: none;
  display: flex;
  align-items: center;
  height: 28px;
  padding-top: 4px;
  border-top: 1px solid var(--line);
}
.status .outline-btn {
  width: 36px;
  padding-right: 6px;
}
.page-select {
  width: 99px;
  height: 24px;
  margin: 0 4px 0 3px;
  padding: 0 7px;
  border: none;
  appearance: none;
  color: #000;
  background: url("data:image/svg+xml,%3Csvg xmlns='http://www.w3.org/2000/svg' width='6' height='4'%3E%3Cpath d='M0 0h6L3 4z' fill='%23666'/%3E%3C/svg%3E") no-repeat right 5px center #f1f0f5;
}
.add {
  width: 54px;
}
.page-link {
  width: 78px;
  text-align: center;
  font-weight: 700;
  color: var(--accent);
}
.status-right {
  display: flex;
  align-items: center;
  margin-left: auto;
  padding-right: 16px;
  gap: 12px;
}
.info {
  margin-right: 4px;
}
.status-right .step {
  margin: 0 -1px;
}
.zoom {
  width: 100px;
  height: 12px;
  margin: 0 -6px;
  appearance: none;
  background: linear-gradient(#000, #000) left center / 40% 2px no-repeat,
    linear-gradient(#ddd, #ddd) left center / 100% 2px no-repeat;
}
.zoom::-webkit-slider-thumb {
  appearance: none;
  width: 12px;
  height: 12px;
  border: 2px solid #000;
  border-radius: 50%;
  background: #fff;
}
.percent {
  gap: 5px;
}
.full {
  margin: 0 7px 0 9px;
}
```
